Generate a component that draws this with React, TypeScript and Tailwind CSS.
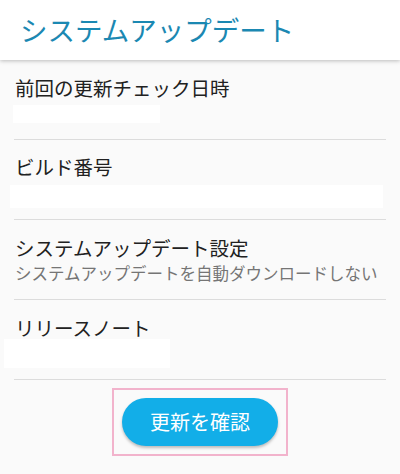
import React from "react";

const font = { fontFamily: '"Noto Sans CJK JP", "Noto Sans", sans-serif' };

function Divider() {
  return <div className="mx-[14px] h-px bg-[#dcdcdc]" />;
}

export default function App() {
  return (
    <div className="w-[400px] h-[474px] bg-[#fafafa] overflow-hidden" style={font}>
      <div className="relative z-10 h-[60px] bg-white shadow-[0_1px_4px_rgba(0,0,0,0.25)] flex items-center pl-[20px]">
        <h1 className="text-[27.5px] leading-[32px] text-[#1b88b2] font-normal -mt-[2px]">システムアップデート</h1>
      </div>

      <div className="h-[79px] pt-[16px]">
        <div className="pl-[15px] text-[19.5px] leading-[24px] text-[#212121]">前回の更新チェック日時</div>
        <div className="mt-[5px] ml-[13px] w-[147px] h-[18px] bg-white" />
      </div>
      <Divider />

      <div className="h-[79px] pt-[15px]">
        <div className="pl-[15px] text-[19.5px] leading-[24px] text-[#212121]">ビルド番号</div>
        <div className="mt-[6px] ml-[10px] w-[373px] h-[23px] bg-white" />
      </div>
      <Divider />

      <div className="h-[79px] pt-[16px]">
        <div className="pl-[15px] text-[19.5px] leading-[24px] text-[#212121]">システムアップデート設定</div>
        <div className="mt-[2px] pl-[15px] text-[16.5px] leading-[22px] text-[#757575]">システムアップデートを自動ダウンロードしない</div>
      </div>
      <Divider />

      <div className="h-[79px] pt-[16px]">
        <div className="pl-[15px] text-[19.5px] leading-[24px] text-[#212121]">リリースノート</div>
        <div className="-mt-[1px] ml-[4px] w-[166px] h-[29px] bg-white" />
      </div>
      <Divider />

      <div className="flex justify-center pt-[8px]">
        <div className="w-[176px] h-[68px] border-2 border-[#f2b3cc] flex items-center justify-center">
          <button className="w-[156px] h-[48px] rounded-full bg-[#12aee8] text-white text-[20px] leading-[24px] shadow-[0_2px_3px_rgba(0,0,0,0.25)]">
            更新を確認
          </button>
        </div>
      </div>
    </div>
  );
}
